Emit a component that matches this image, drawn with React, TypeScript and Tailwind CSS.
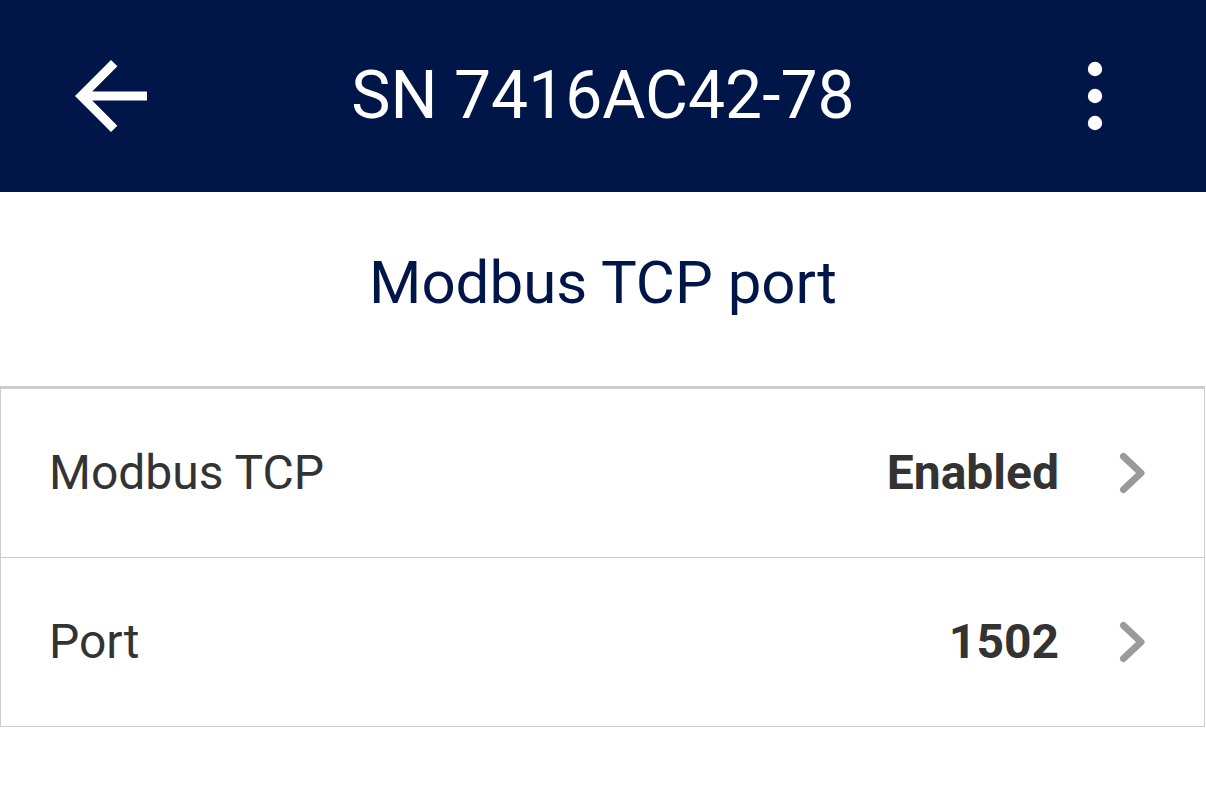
const Chevron = () => (
  <svg viewBox="0 0 28 42" className="w-[28px] h-[42px] shrink-0">
    <path d="M5.5 4.5 L23 21 L5.5 37.5" fill="none" stroke="#9a9a9a" strokeWidth="7" strokeLinecap="round" strokeLinejoin="round" />
  </svg>
);

const rows = [
  { label: "Modbus TCP", value: "Enabled" },
  { label: "Port", value: "1502" },
];

export default function App() {
  return (
    <div className="w-[1206px] h-[806px] bg-white font-['Roboto',sans-serif]">
      <div className="h-[192px] bg-[#001648] flex items-center justify-between">
        <svg viewBox="0 0 24 24" className="w-[108px] h-[108px] ml-[57px]" fill="white">
          <path d="M20 11H7.83l5.59-5.59L12 4l-8 8 8 8 1.41-1.41L7.83 13H20v-2z" />
        </svg>
        <h1 className="text-white text-[66px] leading-none">SN 7416AC42-78</h1>
        <svg viewBox="0 0 24 24" className="w-[108px] h-[108px] mr-[57px]" fill="white">
          <circle cx="12" cy="6" r="1.6" />
          <circle cx="12" cy="12" r="1.6" />
          <circle cx="12" cy="18" r="1.6" />
        </svg>
      </div>
      <div className="h-[194px] flex items-center justify-center pb-[12px]">
        <h2 className="text-[#001648] text-[60px] leading-none">Modbus TCP port</h2>
      </div>
      <div className="border-t-[3px] border-t-[#cccccc] border-x border-x-[#cccccc] mr-[1px]">
        {rows.map((row) => (
          <div key={row.label} className="h-[169px] flex items-center border-b border-[#cccccc] pl-[48px] pr-[58px]">
            <span className="text-[#333333] text-[48px] flex-1">{row.label}</span>
            <span className="text-[#333333] text-[48px] font-bold mr-[59px]">{row.value}</span>
            <Chevron />
          </div>
        ))}
      </div>
    </div>
  );
}
